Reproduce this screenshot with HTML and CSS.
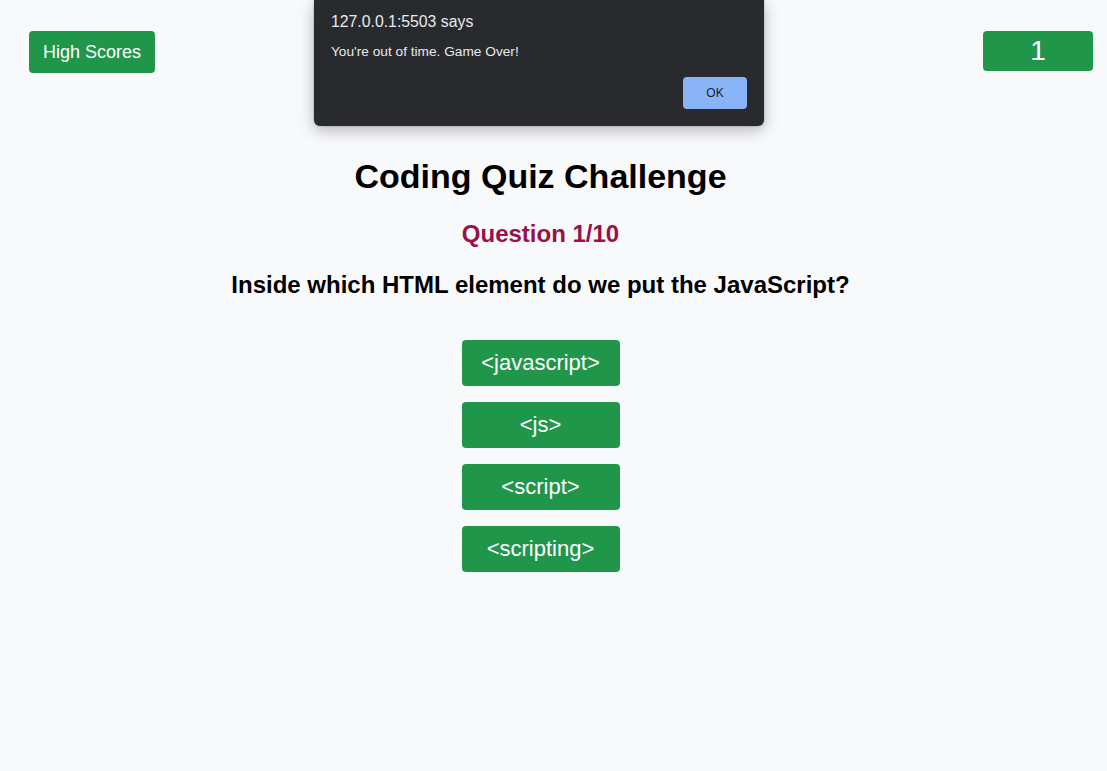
FILE: index.html
```html
<!DOCTYPE html>
<html lang="en">
<head>
<meta charset="utf-8">
<title>Coding Quiz Challenge</title>
<link rel="stylesheet" href="styles.css">
</head>
<body>
<header class="topbar">
  <button class="btn hs-btn">High Scores</button>
  <div class="timer">1</div>
</header>
<main class="quiz">
  <h1 class="title">Coding Quiz Challenge</h1>
  <h2 class="counter">Question 1/10</h2>
  <h3 class="question">Inside which HTML element do we put the JavaScript?</h3>
  <div class="answers">
    <button class="btn answer">&lt;javascript&gt;</button>
    <button class="btn answer">&lt;js&gt;</button>
    <button class="btn answer">&lt;script&gt;</button>
    <button class="btn answer">&lt;scripting&gt;</button>
  </div>
</main>
<div class="dialog" role="alertdialog">
  <div class="dialog-title">127.0.0.1:5503 says</div>
  <div class="dialog-msg">You're out of time. Game Over!</div>
  <div class="dialog-actions"><button class="dialog-ok">OK</button></div>
</div>
</body>
</html>
```
FILE: styles.css
```css
* { box-sizing: border-box; }
html, body { margin: 0; padding: 0; }
body {
  background: #f8f9fb;
  font-family: "Liberation Sans", Arial, Helvetica, sans-serif;
  color: #000;
  width: 1107px;
  height: 771px;
  position: relative;
  overflow: hidden;
}
.btn {
  background: #20964a;
  color: #fff;
  border: none;
  border-radius: 4px;
  font-family: "Liberation Sans", Arial, sans-serif;
  cursor: pointer;
  padding: 0;
}
.topbar {
  display: flex;
  justify-content: space-between;
  align-items: flex-start;
  padding: 31px 14px 0 29px;
}
.hs-btn {
  width: 126px;
  height: 42px;
  font-size: 18px;
}
.timer {
  width: 110px;
  height: 40px;
  background: #20964a;
  color: #fff;
  border-radius: 4px;
  font-size: 28px;
  display: flex;
  align-items: center;
  justify-content: center;
}
.quiz {
  width: 1081px;
  display: flex;
  flex-direction: column;
  align-items: center;
  padding-top: 84px;
}
.title {
  margin: 0;
  font-size: 34px;
  line-height: 39px;
  font-weight: bold;
}
.counter {
  margin: 24px 0 0;
  font-size: 24px;
  line-height: 28px;
  color: #9b1048;
}
.question {
  margin: 23px 0 0;
  font-size: 24px;
  line-height: 28px;
}
.answers {
  margin-top: 41px;
  display: flex;
  flex-direction: column;
  gap: 16px;
}
.answer {
  width: 158px;
  height: 46px;
  font-size: 22px;
}
.dialog {
  position: absolute;
  left: 314px;
  top: 0;
  width: 450px;
  height: 126px;
  background: #292a2e;
  border-radius: 0 0 6px 6px;
  box-shadow: 0 4px 16px rgba(0,0,0,0.28), 0 0 2px rgba(0,0,0,0.3);
  padding: 13px 17px 0 17px;
  color: #e8eaed;
}
.dialog-title {
  font-size: 15.8px;
  line-height: 18px;
}
.dialog-msg {
  margin-top: 13px;
  font-size: 13.7px;
  line-height: 16px;
}
.dialog-actions {
  display: flex;
  justify-content: flex-end;
  margin-top: 17px;
}
.dialog-ok {
  width: 64px;
  height: 32px;
  background: #8ab4f8;
  color: #202124;
  border: none;
  border-radius: 4px;
  font-family: "Liberation Sans", Arial, sans-serif;
  font-size: 12px;
  font-weight: 500;
  padding: 0;
}
```
